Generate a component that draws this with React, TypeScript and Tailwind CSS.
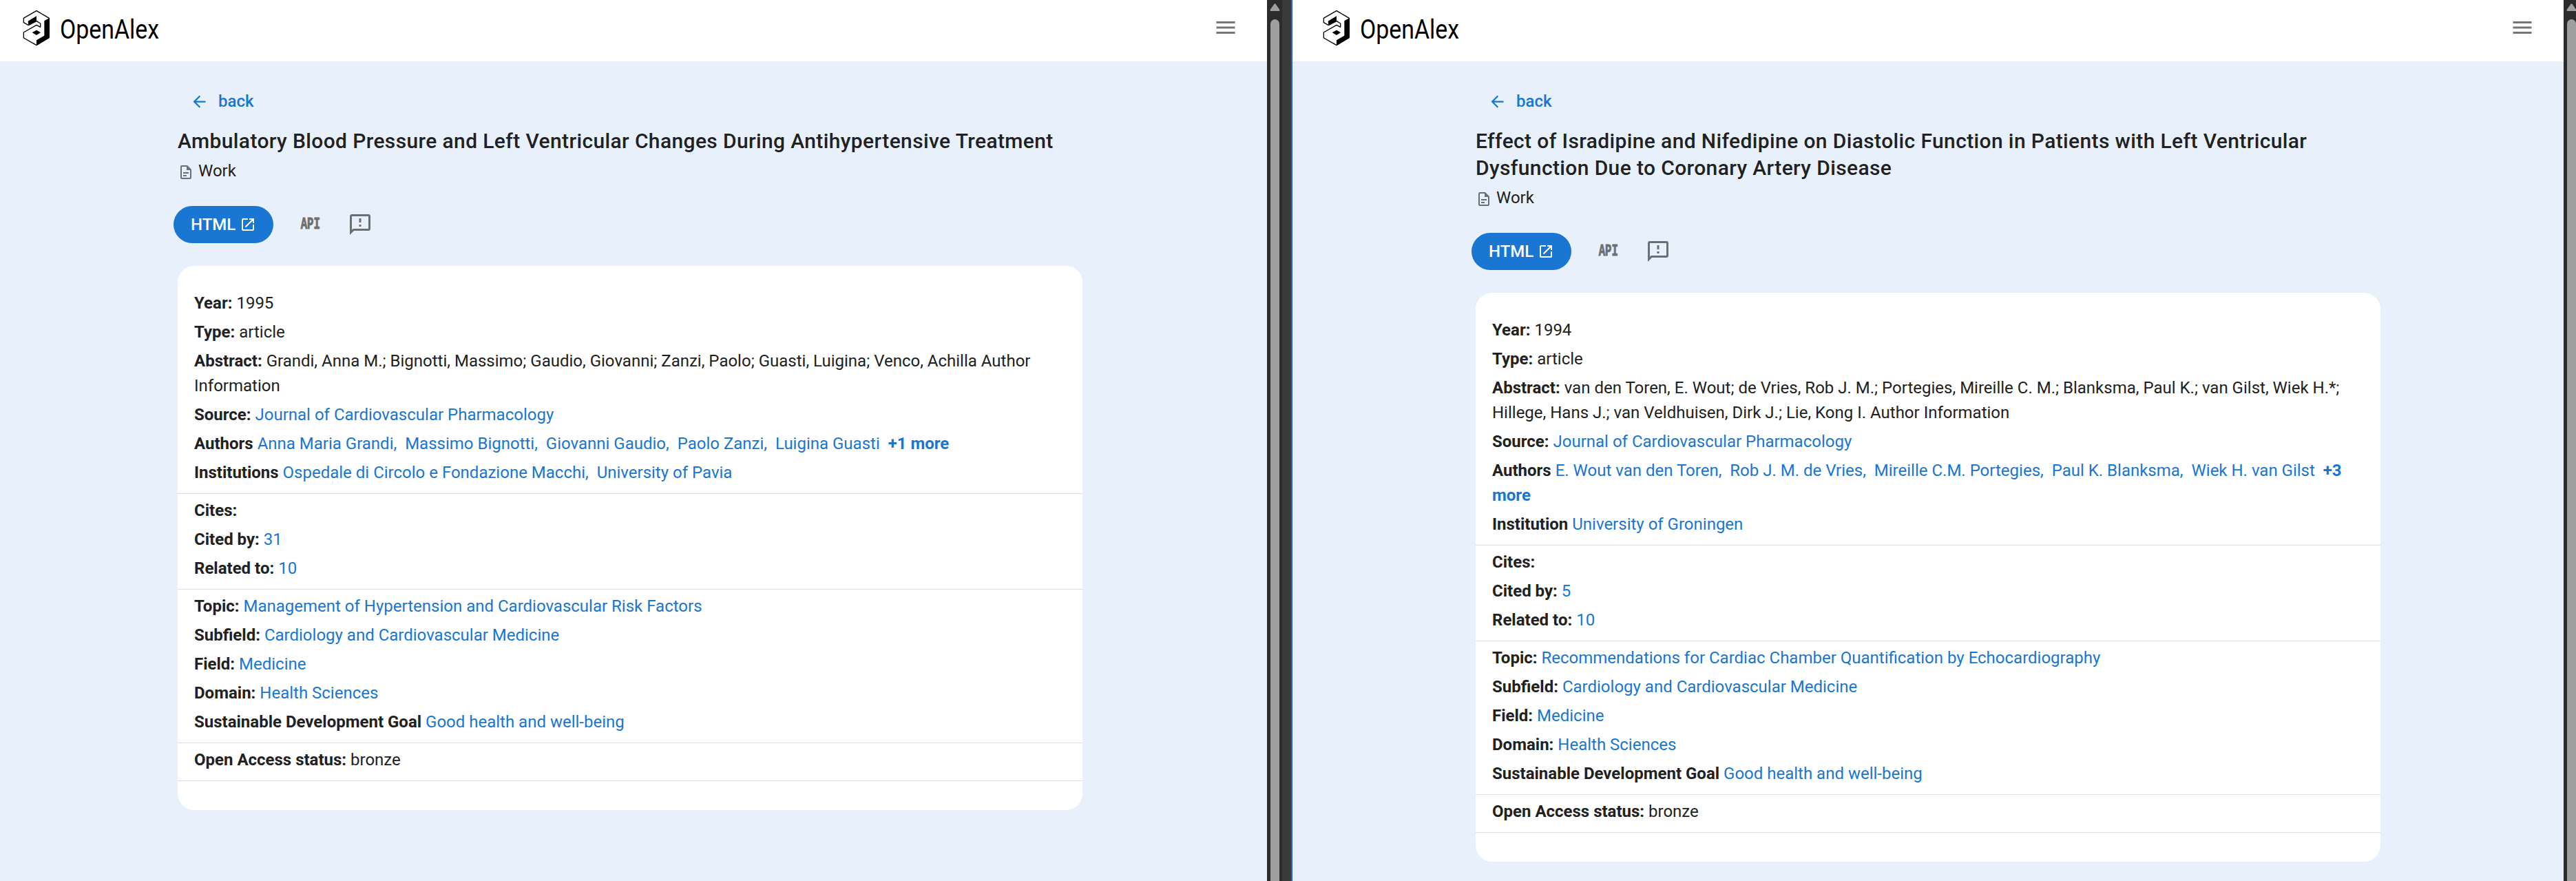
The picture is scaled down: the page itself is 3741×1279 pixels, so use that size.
import React from "react";

type Row = { label: string; text?: string; links?: string[]; more?: string };
type Work = { title: string; sections: Row[][] };

const works: Work[] = [
  {
    title: "Ambulatory Blood Pressure and Left Ventricular Changes During Antihypertensive Treatment",
    sections: [
      [
        { label: "Year:", text: "1995" },
        { label: "Type:", text: "article" },
        {
          label: "Abstract:",
          text: "Grandi, Anna M.; Bignotti, Massimo; Gaudio, Giovanni; Zanzi, Paolo; Guasti, Luigina; Venco, Achilla Author Information",
        },
        { label: "Source:", links: ["Journal of Cardiovascular Pharmacology"] },
        {
          label: "Authors",
          links: ["Anna Maria Grandi", "Massimo Bignotti", "Giovanni Gaudio", "Paolo Zanzi", "Luigina Guasti"],
          more: "+1 more",
        },
        { label: "Institutions", links: ["Ospedale di Circolo e Fondazione Macchi", "University of Pavia"] },
      ],
      [{ label: "Cites:" }, { label: "Cited by:", links: ["31"] }, { label: "Related to:", links: ["10"] }],
      [
        { label: "Topic:", links: ["Management of Hypertension and Cardiovascular Risk Factors"] },
        { label: "Subfield:", links: ["Cardiology and Cardiovascular Medicine"] },
        { label: "Field:", links: ["Medicine"] },
        { label: "Domain:", links: ["Health Sciences"] },
        { label: "Sustainable Development Goal", links: ["Good health and well-being"] },
      ],
      [{ label: "Open Access status:", text: "bronze" }],
    ],
  },
  {
    title:
      "Effect of Isradipine and Nifedipine on Diastolic Function in Patients with Left Ventricular Dysfunction Due to Coronary Artery Disease",
    sections: [
      [
        { label: "Year:", text: "1994" },
        { label: "Type:", text: "article" },
        {
          label: "Abstract:",
          text: "van den Toren, E. Wout; de Vries, Rob J. M.; Portegies, Mireille C. M.; Blanksma, Paul K.; van Gilst, Wiek H.*; Hillege, Hans J.; van Veldhuisen, Dirk J.; Lie, Kong I. Author Information",
        },
        { label: "Source:", links: ["Journal of Cardiovascular Pharmacology"] },
        {
          label: "Authors",
          links: [
            "E. Wout van den Toren",
            "Rob J. M. de Vries",
            "Mireille C.M. Portegies",
            "Paul K. Blanksma",
            "Wiek H. van Gilst",
          ],
          more: "+3 more",
        },
        { label: "Institution", links: ["University of Groningen"] },
      ],
      [{ label: "Cites:" }, { label: "Cited by:", links: ["5"] }, { label: "Related to:", links: ["10"] }],
      [
        { label: "Topic:", links: ["Recommendations for Cardiac Chamber Quantification by Echocardiography"] },
        { label: "Subfield:", links: ["Cardiology and Cardiovascular Medicine"] },
        { label: "Field:", links: ["Medicine"] },
        { label: "Domain:", links: ["Health Sciences"] },
        { label: "Sustainable Development Goal", links: ["Good health and well-being"] },
      ],
      [{ label: "Open Access status:", text: "bronze" }],
    ],
  },
];

const icons = {
  menu: "M3,6H21V8H3V6M3,11H21V13H3V11M3,16H21V18H3V16Z",
  arrowLeft: "M20,11V13H7.83L13.42,18.59L12,20L4,12L12,4L13.42,5.41L7.83,11H20Z",
  file: "M6,2A2,2 0 0,0 4,4V20A2,2 0 0,0 6,22H18A2,2 0 0,0 20,20V8L14,2H6M6,4H13V9H18V20H6V4M8,12V14H16V12H8M8,16V18H13V16H8Z",
  open: "M14,3V5H17.59L7.76,14.83L9.17,16.24L19,6.41V10H21V3M19,19H5V5H12V3H5C3.89,3 3,3.9 3,5V19A2,2 0 0,0 5,21H19A2,2 0 0,0 21,19V12H19V19Z",
  message:
    "M13,10H11V6H13V10M13,14H11V12H13V14M20,2A2,2 0 0,1 22,4V16A2,2 0 0,1 20,18H6L2,22V4C2,2.89 2.9,2 4,2H20M20,4H4V17.17L5.17,16H20V4Z",
};

function Icon({ d, className }: { d: string; className: string }) {
  return (
    <svg viewBox="0 0 24 24" fill="currentColor" className={`shrink-0 ${className}`}>
      <path d={d} />
    </svg>
  );
}

function Logo() {
  return (
    <div className="flex items-start">
      <svg viewBox="0 0 120 159" className="mt-[14px] h-[53px] w-10 shrink-0">
        <g transform="translate(-99 -42)" strokeLinejoin="round">
          <path
            d="M159 47L214 79V164L159 197L103 165V141L159 109L176 118V102L159 92L124 110L103 98V79Z"
            fill="#fff"
            stroke="#000"
            strokeWidth="4"
          />
          <path d="M193 91L215 79V164L159 198V175L193 155Z" />
          <path d="M122 92L159 70V91L124 111Z" />
          <path d="M159 131L177 142L159 153L140 142Z" />
        </g>
      </svg>
      <span className="ml-[14px] mt-[15px] inline-block origin-left scale-x-[0.868] text-[39px] leading-[56px] text-black">
        OpenAlex
      </span>
    </div>
  );
}

function DetailRow({ row }: { row: Row }) {
  return (
    <div className="mb-1.5 leading-9">
      <span className="font-bold">{row.label}</span> {row.text}
      {row.links?.map((link, i) => (
        <React.Fragment key={link}>
          <a className="text-[#1976d2]">
            {link}
            {i < row.links!.length - 1 && ","}
          </a>
          {i < row.links!.length - 1 && <>&nbsp; </>}
        </React.Fragment>
      ))}
      {row.more && (
        <>
          &nbsp; <a className="font-bold text-[#1976d2]">{row.more}</a>
        </>
      )}
    </div>
  );
}

function WorkPage({
  work,
  className,
  headerClass,
  mainClass,
}: {
  work: Work;
  className: string;
  headerClass: string;
  mainClass: string;
}) {
  return (
    <div className={`h-full shrink-0 overflow-hidden bg-[#e8f1fb] ${className}`}>
      <header className={`flex h-[89px] items-start justify-between bg-white pr-[42px] ${headerClass}`}>
        <Logo />
        <Icon d={icons.menu} className="mt-[22px] size-9 text-black/54" />
      </header>
      <main className={`w-[1314px] ${mainClass}`}>
        <div className="flex h-[85px] items-center pl-[18px] pt-[31px] font-medium text-[#1976d2]">
          <Icon d={icons.arrowLeft} className="mr-[14px] size-[27px]" />
          back
        </div>
        <h1 className="mt-[11px] text-[30px] font-medium leading-[39px] tracking-[0.0125em]">{work.title}</h1>
        <div className="mt-1.5 flex h-9 items-start gap-1.5 leading-9">
          <Icon d={icons.file} className="mt-2 size-6 text-black/54" />
          Work
        </div>
        <div className="-ml-1.5 mt-[33px] flex h-[54px] items-center text-black/54">
          <div className="flex h-[54px] w-[145px] items-center gap-1.5 rounded-full bg-[#1976d2] pl-[25px] font-medium text-white">
            HTML
            <Icon d={icons.open} className="size-6" />
          </div>
          <div className="ml-[27px] flex size-[54px] items-center justify-center">
            <span className="scale-x-[0.68] font-['Liberation_Mono',monospace] text-[23px] font-bold text-[#6b6f74] [-webkit-text-stroke:1px_#6b6f74]">
              API
            </span>
          </div>
          <div className="ml-[18px] flex size-[54px] items-center justify-center">
            <Icon d={icons.message} className="size-9" />
          </div>
        </div>
        <div className="mt-[33px] rounded-[24px] bg-white pb-[42px] pt-[30px]">
          {work.sections.map((rows, i) => (
            <section key={i} className="border-b border-[#dedede] px-6 py-1.5">
              {rows.map((row) => (
                <DetailRow key={row.label} row={row} />
              ))}
            </section>
          ))}
        </div>
      </main>
    </div>
  );
}

function Scrollbar({ className }: { className: string }) {
  return (
    <div className={`flex h-full shrink-0 flex-col items-start overflow-hidden bg-[#2b2b2b] ${className}`}>
      <svg viewBox="0 0 15 12" className="ml-1 mt-[5px] h-3 w-[15px] shrink-0">
        <path d="M7.5 1.5L13.3 9.8H1.7Z" fill="#9f9f9f" stroke="#9f9f9f" strokeWidth="2.4" strokeLinejoin="round" />
      </svg>
      <div className="ml-[5px] mt-[11px] w-[13px] grow rounded-t-full bg-[#9f9f9f]" />
    </div>
  );
}

export default function App() {
  return (
    <div className="flex h-[1279px] w-[3741px] overflow-hidden bg-white font-['Roboto',sans-serif] text-[24px] text-[#212121]">
      <WorkPage work={works[0]} className="w-[1840px]" headerClass="pl-[33px]" mainClass="ml-[258px]" />
      <Scrollbar className="w-[22px]" />
      <div className="h-full w-[15px] shrink-0 border-r-2 border-[#2461e0] bg-[#3a3a3a]" />
      <WorkPage work={works[1]} className="w-[1846px]" headerClass="pl-[44px]" mainClass="ml-[266px]" />
      <Scrollbar className="w-[18px]" />
    </div>
  );
}
